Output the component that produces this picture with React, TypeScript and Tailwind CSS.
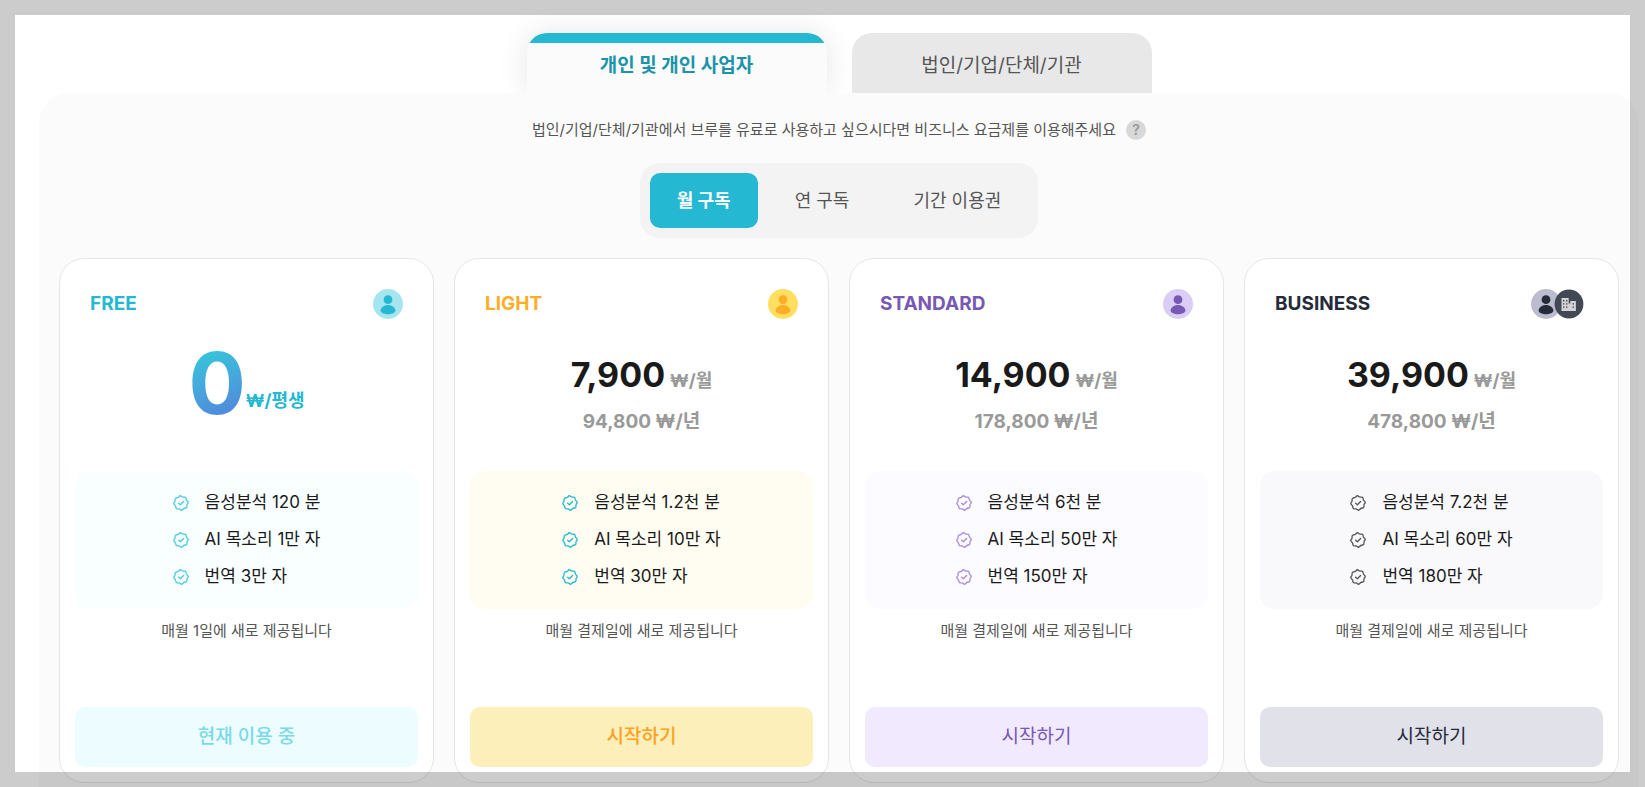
import { useState } from 'react'
import clsx from 'clsx'

interface Plan {
  id: string
  name: string
  price: string
  yearly?: string
  features: string[]
  note: string
  action: string
  nameColor: string
  avatarBg: string
  avatarFg: string
  boxColor: string
  checkColor: string
  buttonColor: string
}

const plans: Plan[] = [
  {
    id: 'free',
    name: 'FREE',
    price: '0',
    features: ['음성분석 120 분', 'AI 목소리 1만 자', '번역 3만 자'],
    note: '매월 1일에 새로 제공됩니다',
    action: '현재 이용 중',
    nameColor: 'text-[#24b8d2]',
    avatarBg: 'fill-[#a5e5ef]',
    avatarFg: 'fill-[#24b8d2]',
    boxColor: 'bg-[#f9ffff]',
    checkColor: 'text-[#4acbe0]',
    buttonColor: 'bg-[#edfcfe] text-[#7adae8] font-medium',
  },
  {
    id: 'light',
    name: 'LIGHT',
    price: '7,900',
    yearly: '94,800',
    features: ['음성분석 1.2천 분', 'AI 목소리 10만 자', '번역 30만 자'],
    note: '매월 결제일에 새로 제공됩니다',
    action: '시작하기',
    nameColor: 'text-[#ffad27]',
    avatarBg: 'fill-[#ffde60]',
    avatarFg: 'fill-[#ffad27]',
    boxColor: 'bg-[#fffdf1]',
    checkColor: 'text-[#24b8d2]',
    buttonColor: 'bg-[#fdefba] text-[#ffa020] font-medium',
  },
  {
    id: 'standard',
    name: 'STANDARD',
    price: '14,900',
    yearly: '178,800',
    features: ['음성분석 6천 분', 'AI 목소리 50만 자', '번역 150만 자'],
    note: '매월 결제일에 새로 제공됩니다',
    action: '시작하기',
    nameColor: 'text-[#7759b3]',
    avatarBg: 'fill-[#dacef5]',
    avatarFg: 'fill-[#7759b3]',
    boxColor: 'bg-[#fcfbff]',
    checkColor: 'text-[#a98bdc]',
    buttonColor: 'bg-[#f1e9fe] text-[#7759b3]',
  },
  {
    id: 'business',
    name: 'BUSINESS',
    price: '39,900',
    yearly: '478,800',
    features: ['음성분석 7.2천 분', 'AI 목소리 60만 자', '번역 180만 자'],
    note: '매월 결제일에 새로 제공됩니다',
    action: '시작하기',
    nameColor: 'text-[#262b3a]',
    avatarBg: 'fill-[#bbbccd]',
    avatarFg: 'fill-[#262b3a]',
    boxColor: 'bg-[#f9f9fb]',
    checkColor: 'text-[#555555]',
    buttonColor: 'bg-[#e1e1ea] text-[#262b3a]',
  },
]

const customerTabs = ['개인 및 개인 사업자', '법인/기업/단체/기관']
const periods = ['월 구독', '연 구독', '기간 이용권']

function PersonIcon({ bg, fg }: { bg: string; fg: string }) {
  return (
    <svg viewBox="0 0 30 30" className="size-[30px]" aria-hidden="true">
      <circle cx="15" cy="15" r="15" className={bg} />
      <circle cx="15" cy="10.7" r="4.4" className={fg} />
      <path
        d="M7.6 21.6c0-3 3.4-5.6 7.4-5.6s7.4 2.6 7.4 5.6c0 2.2-3.6 3.7-7.4 3.7s-7.4-1.5-7.4-3.7z"
        className={fg}
      />
    </svg>
  )
}

function BuildingIcon() {
  return (
    <svg viewBox="0 0 30 30" className="-ml-[7px] size-[30px]" aria-hidden="true">
      <circle cx="15" cy="15" r="14.4" className="fill-[#434855]" />
      <path d="M7.5 9h7.2v5.4h1.6V12h5.6v10H7.5z" className="fill-[#d3d3d6]" />
      <path
        d="M9 11h1.4v1.4H9zM12 11h1.4v1.4H12zM9 14.2h1.4v1.4H9zM12 14.2h1.4v1.4H12zM9 17.4h1.4v1.4H9zM12 17.4h1.4v1.4H12zM18.6 14.2H20v1.4h-1.4zM18.6 17.4H20v1.4h-1.4z"
        className="fill-[#434855]"
      />
    </svg>
  )
}

function BadgeIcon({ color }: { color: string }) {
  return (
    <svg
      viewBox="0 0 16 16"
      className={clsx('size-4', color)}
      fill="none"
      stroke="currentColor"
      strokeWidth="1.3"
      strokeLinecap="round"
      strokeLinejoin="round"
      aria-hidden="true"
    >
      <path d="M8 .9Q9.5 2.3 10.9 2.1Q12.6 1.9 13 3Q13.1 5 14 5.8Q15.6 7 15.1 8Q13.7 9.5 13.9 10.9Q14.1 12.6 13 13Q11 13.1 10.2 14Q9 15.6 8 15.1Q6.5 13.7 5.1 13.9Q3.4 14.1 3 13Q2.9 11 2 10.2Q.4 9 .9 8Q2.3 6.5 2.1 5.1Q1.9 3.4 3 3Q5 2.9 5.8 2Q7 .4 8 .9z" />
      <path d="M5.6 8.2 7.4 9.8 10.6 6.5" />
    </svg>
  )
}

function PlanPrice({ plan }: { plan: Plan }) {
  if (!plan.yearly) {
    return (
      <div className="flex h-[137px] items-start justify-center pt-[7px] leading-none">
        <span className="bg-linear-160 from-[#33c5da] from-15% to-[#5087dc] to-85% bg-clip-text text-[85px] font-bold text-transparent">
          {plan.price}
        </span>
        <span className="pt-[46px] text-[18px] leading-7 font-bold text-[#24b8d2]">₩/평생</span>
      </div>
    )
  }

  return (
    <div className="flex h-[137px] flex-col items-center pt-[21px] font-bold text-[#999999]">
      <div className="flex h-10 items-center gap-[5px]">
        <span className="text-[34px] leading-10 text-[#1a1a1a]">{plan.price}</span>
        <span className="pt-3 text-[18px] leading-6">₩/월</span>
      </div>
      <div className="mt-[13px] text-[19px] leading-7">{plan.yearly} ₩/년</div>
    </div>
  )
}

function PlanCard({ plan }: { plan: Plan }) {
  return (
    <article className="flex flex-col rounded-[25px] border border-[#e6e6e6] bg-white p-[15px]">
      <header
        className={clsx(
          'flex h-[60px] items-center justify-between pl-[15px]',
          plan.id === 'business' ? 'pr-[19px]' : 'pr-[15px]'
        )}
      >
        <h2 className={clsx('text-[19px] font-bold', plan.nameColor)}>{plan.name}</h2>
        <div className="flex">
          <PersonIcon bg={plan.avatarBg} fg={plan.avatarFg} />
          {plan.id === 'business' && <BuildingIcon />}
        </div>
      </header>

      <PlanPrice plan={plan} />

      <div className={clsx('flex justify-center rounded-[15px] py-[14px]', plan.boxColor)}>
        <ul className="flex flex-col gap-px">
          {plan.features.map((feature) => (
            <li key={feature} className="flex h-9 items-center gap-4 text-[17px] text-[#1a1a1a]">
              <BadgeIcon color={plan.checkColor} />
              {feature}
            </li>
          ))}
        </ul>
      </div>

      <p className="mt-[10px] text-center text-[15px] leading-6 text-[#555555]">{plan.note}</p>

      <button
        type="button"
        className={clsx('mt-16 h-[60px] rounded-[10px] text-[19px]', plan.buttonColor)}
      >
        {plan.action}
      </button>
    </article>
  )
}

export default function App() {
  const [customer, setCustomer] = useState(0)
  const [period, setPeriod] = useState(0)

  return (
    <div className="relative flex min-h-screen flex-col bg-white pt-[33px] pr-[6px] pl-[39px] font-['Inter','Noto_Sans_CJK_KR',sans-serif]">
      {/* Customer type */}
      <div className="flex justify-center gap-[25px]" role="tablist">
        {customerTabs.map((label, index) => (
          <button
            key={label}
            type="button"
            role="tab"
            aria-selected={customer === index}
            onClick={() => setCustomer(index)}
            className={clsx(
              'h-[60px] w-[300px] overflow-hidden rounded-t-[20px] text-[19px]',
              customer === index
                ? 'bg-[#fbfbfb] font-bold text-[#1c93a8] shadow-[0_0_30px_rgba(0,0,0,0.1)]'
                : 'bg-[#e8e8e8] text-[#555555]'
            )}
          >
            <span
              className={clsx(
                'flex h-full items-center justify-center border-t-10 pb-1',
                customer === index ? 'border-[#24b8d2]' : 'border-transparent'
              )}
            >
              {label}
            </span>
          </button>
        ))}
      </div>

      <main className="relative flex-1 rounded-t-[30px] bg-[#fbfbfb] px-5 pb-1">
        <div className="flex h-[70px] items-center justify-center gap-[10px] pt-1 text-[15px] text-[#555555]">
          <p>법인/기업/단체/기관에서 브루를 유료로 사용하고 싶으시다면 비즈니스 요금제를 이용해주세요</p>
          <button
            type="button"
            aria-label="도움말"
            className="flex size-5 items-center justify-center rounded-full bg-[#d8d8d8] text-sm font-semibold text-[#999999]"
          >
            ?
          </button>
        </div>

        {/* Billing period */}
        <div className="flex justify-center">
          <div className="flex gap-[10px] rounded-[20px] bg-[#f3f3f3] p-[10px]">
            {periods.map((label, index) => (
              <button
                key={label}
                type="button"
                aria-pressed={period === index}
                onClick={() => setPeriod(index)}
                className={clsx(
                  'h-[55px] rounded-[10px] px-[27px] text-[18px]',
                  period === index ? 'bg-[#24b8d2] font-bold text-white' : 'text-[#555555]'
                )}
              >
                {label}
              </button>
            ))}
          </div>
        </div>

        <div className="mt-5 grid grid-cols-4 gap-5">
          {plans.map((plan) => (
            <PlanCard key={plan.id} plan={plan} />
          ))}
        </div>
      </main>

      {/* Translucent frame over the page edges */}
      <div className="pointer-events-none absolute inset-0 border-15 border-black/20" />
    </div>
  )
}
